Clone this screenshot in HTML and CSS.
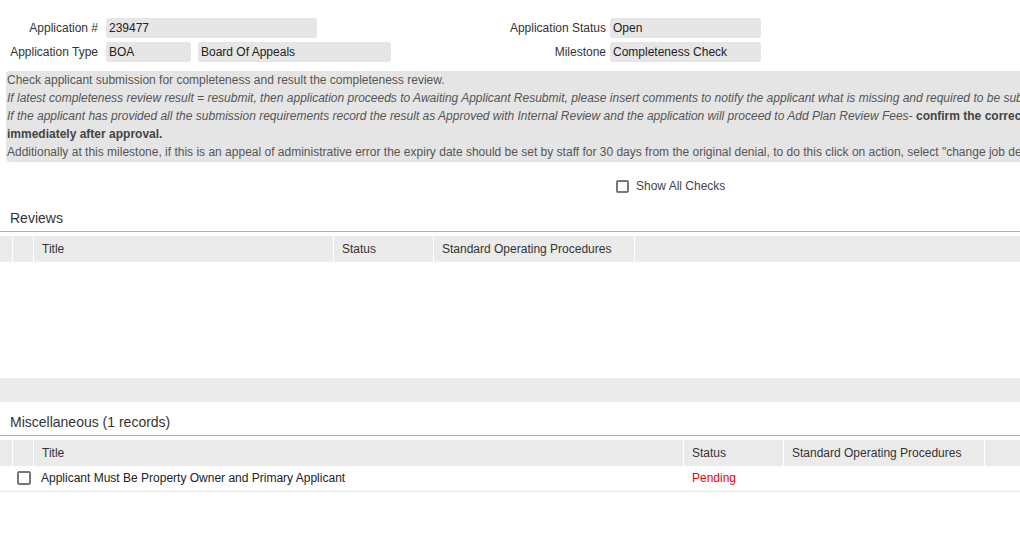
FILE: index.html
```html
<!DOCTYPE html>
<html>
<head>
<meta charset="utf-8">
<link rel="stylesheet" href="styles.css">
</head>
<body>
<div class="page">
  <div class="form">
    <div class="form-row">
      <div class="left">
        <span class="label">Application #</span>
        <span class="field w-num">239477</span>
      </div>
      <div class="right">
        <span class="label label-r">Application Status</span>
        <span class="field w-r">Open</span>
      </div>
    </div>
    <div class="form-row">
      <div class="left">
        <span class="label">Application Type</span>
        <span class="field w-code">BOA</span>
        <span class="field w-name">Board Of Appeals</span>
      </div>
      <div class="right">
        <span class="label label-r">Milestone</span>
        <span class="field w-r">Completeness Check</span>
      </div>
    </div>
  </div>

  <div class="info">
    <div class="line">Check applicant submission for completeness and result the completeness review.</div>
    <div class="line it">If latest completeness review result = resubmit, then application proceeds to Awaiting Applicant Resubmit, please insert comments to notify the applicant what is missing and required to be submitted.</div>
    <div class="line"><span class="it">If the applicant has provided all the submission requirements record the result as Approved with Internal Review and the application will proceed to Add Plan Review Fees-</span> <b>confirm the correct fees are applied</b></div>
    <div class="line"><b>immediately after approval.</b></div>
    <div class="line">Additionally at this milestone, if this is an appeal of administrative error the expiry date should be set by staff for 30 days from the original denial, to do this click on action, select "change job details".</div>
  </div>

  <div class="show-all">
    <span class="cb"></span>
    <span>Show All Checks</span>
  </div>

  <div class="section-title">Reviews</div>
  <div class="table">
    <div class="thead cols-rev">
      <div class="th"></div>
      <div class="th"></div>
      <div class="th">Title</div>
      <div class="th">Status</div>
      <div class="th">Standard Operating Procedures</div>
      <div class="th last"></div>
    </div>
    <div class="tbody-empty"></div>
    <div class="tfoot"></div>
  </div>

  <div class="section-title misc">Miscellaneous (1 records)</div>
  <div class="table">
    <div class="thead cols-misc">
      <div class="th"></div>
      <div class="th"></div>
      <div class="th">Title</div>
      <div class="th">Status</div>
      <div class="th">Standard Operating Procedures</div>
      <div class="th last"></div>
    </div>
    <div class="trow cols-misc">
      <div class="td"></div>
      <div class="td cbcell"><span class="cb"></span></div>
      <div class="td title">Applicant Must Be Property Owner and Primary Applicant</div>
      <div class="td pending">Pending</div>
      <div class="td"></div>
      <div class="td"></div>
    </div>
  </div>
</div>
</body>
</html>
```

FILE: styles.css
```css
html, body {
  margin: 0;
  padding: 0;
  background: #fff;
  overflow: hidden;
}
body {
  font-family: "Liberation Sans", Arial, sans-serif;
  font-size: 12px;
  color: #333;
}
.page {
  width: 1020px;
  padding-top: 18px;
}
.form {
  display: flex;
  flex-direction: column;
  gap: 4px;
}
.form-row {
  display: flex;
  height: 20px;
}
.left {
  width: 420px;
  display: flex;
  align-items: center;
}
.right {
  display: flex;
  align-items: center;
}
.label {
  width: 98px;
  text-align: right;
  margin-right: 8px;
  color: #333;
  white-space: nowrap;
}
.label-r {
  width: 186px;
  margin-right: 4px;
}
.field {
  height: 20px;
  line-height: 20px;
  background: #e6e6e6;
  border-radius: 3px;
  padding-left: 3px;
  box-sizing: border-box;
  color: #222;
  white-space: nowrap;
}
.w-num { width: 211px; }
.w-code { width: 85px; margin-right: 7px; }
.w-name { width: 193px; }
.w-r { width: 151px; }

.info {
  margin-top: 9px;
  margin-left: 6px;
  width: 1200px;
  background: #e5e5e5;
  border-radius: 4px;
  padding: 0 0 1px 1px;
  color: #555;
  line-height: 18px;
}
.line { white-space: nowrap; }
.it { font-style: italic; }
.info b { color: #444; }

.show-all {
  display: flex;
  align-items: center;
  height: 20px;
  margin-top: 14px;
  padding-left: 616px;
  color: #444;
}
.cb {
  display: inline-block;
  width: 13px;
  height: 13px;
  box-sizing: border-box;
  border: 2px solid #777;
  border-radius: 2px;
  background: #fff;
}
.show-all .cb { margin-right: 7px; }

.section-title {
  margin-top: 12px;
  padding-left: 10px;
  font-size: 14px;
  color: #333;
  height: 23px;
  line-height: 21px;
  border-bottom: 1px solid #b0b0b0;
}
.section-title.misc { margin-top: 10px; }

.table {
  margin-top: 4px;
}
.thead, .trow {
  display: grid;
}
.cols-rev { grid-template-columns: 13px 21px 300px 100px 201px 1fr; }
.cols-misc { grid-template-columns: 13px 21px 650px 100px 201px 1fr; }
.thead {
  height: 26px;
  background: #ebebeb;
}
.th {
  border-right: 1px solid #fff;
  line-height: 26px;
  padding-left: 8px;
  color: #333;
  white-space: nowrap;
}
.th:first-child, .th:nth-child(2) { padding-left: 0; }
.th.last { border-right: none; }
.tbody-empty { height: 116px; }
.tfoot {
  height: 24px;
  background: #ebebeb;
}
.trow {
  height: 25px;
  border-bottom: 1px solid #e6e6e6;
  align-items: start;
}
.td {
  white-space: nowrap;
  color: #222;
  line-height: 24px;
  height: 24px;
}
.cbcell {
  display: flex;
  align-items: center;
}
.cbcell .cb {
  width: 14px;
  height: 14px;
  margin-left: 4px;
}
.td.title { padding-left: 7px; }
.td.pending { padding-left: 8px; color: #e00; }
```
